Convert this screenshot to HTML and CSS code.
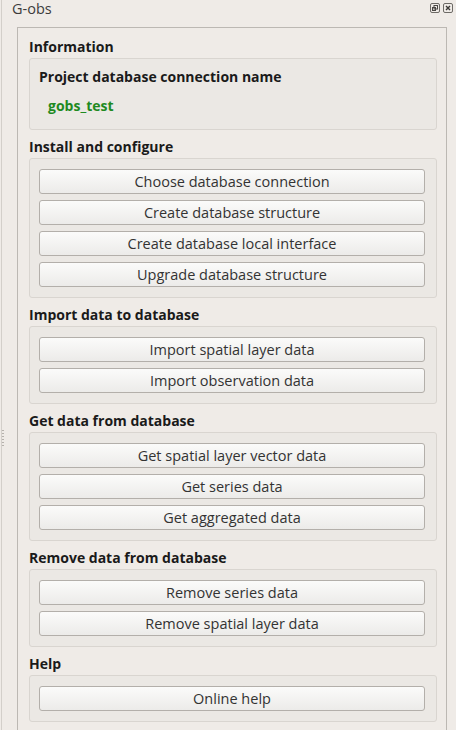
FILE: index.html
```html
<!DOCTYPE html>
<html>
<head>
<meta charset="utf-8">
<link rel="stylesheet" href="styles.css">
</head>
<body>
<div class="dock">
  <div class="edge"><span class="grip"></span></div>
  <div class="main">
    <div class="titlebar">
      <span class="title">G-obs</span>
      <span class="tools">
        <svg class="tool" width="10" height="10" viewBox="0 0 10 10"><rect x="0.5" y="0.5" width="9" height="9" rx="1.5" fill="none" stroke="#6d6a66"/><rect x="4" y="2.5" width="3.5" height="3.5" fill="none" stroke="#4a4744"/><rect x="2.5" y="4.5" width="3" height="3" fill="none" stroke="#4a4744"/></svg>
        <svg class="tool" width="10" height="10" viewBox="0 0 10 10"><rect x="0.5" y="0.5" width="9" height="9" rx="1.5" fill="none" stroke="#6d6a66"/><path d="M3 3 L7 7 M7 3 L3 7" stroke="#3a3836" stroke-width="1.4"/></svg>
      </span>
    </div>
    <div class="frame">
      <div class="section first">Information</div>
      <div class="group info">
        <div class="label">Project database connection name</div>
        <div class="value">gobs_test</div>
      </div>

      <div class="section">Install and configure</div>
      <div class="group">
        <button class="btn">Choose database connection</button>
        <button class="btn">Create database structure</button>
        <button class="btn">Create database local interface</button>
        <button class="btn">Upgrade database structure</button>
      </div>

      <div class="section">Import data to database</div>
      <div class="group">
        <button class="btn">Import spatial layer data</button>
        <button class="btn">Import observation data</button>
      </div>

      <div class="section">Get data from database</div>
      <div class="group">
        <button class="btn">Get spatial layer vector data</button>
        <button class="btn">Get series data</button>
        <button class="btn">Get aggregated data</button>
      </div>

      <div class="section">Remove data from database</div>
      <div class="group">
        <button class="btn">Remove series data</button>
        <button class="btn">Remove spatial layer data</button>
      </div>

      <div class="section">Help</div>
      <div class="group">
        <button class="btn">Online help</button>
      </div>
    </div>
  </div>
</div>
</body>
</html>
```
FILE: styles.css
```css
*, *::before, *::after {
  box-sizing: border-box;
}
html, body {
  margin: 0;
  padding: 0;
}
body {
  width: 456px;
  height: 730px;
  overflow: hidden;
  background: #efebe7;
  font-family: "Open Sans", "DejaVu Sans", sans-serif;
  color: #3c3c3c;
}
.dock {
  display: flex;
  height: 730px;
}
.edge {
  width: 1px;
  margin-left: 1px;
  background: #d3cfca;
  position: relative;
}
.grip {
  position: absolute;
  left: 1px;
  top: 430px;
  width: 2px;
  height: 16px;
  background: repeating-linear-gradient(to bottom, #b5b1ac 0 1px, transparent 1px 3px);
}
.main {
  flex: 1;
  display: flex;
  flex-direction: column;
}
.titlebar {
  height: 27px;
  display: flex;
  align-items: flex-start;
  justify-content: space-between;
}
.title {
  margin-left: 10px;
  font-size: 14.5px;
  line-height: 18px;
  color: #3c3c3c;
}
.tools {
  display: flex;
  gap: 3px;
  margin-top: 3px;
  margin-right: 3px;
}
.tool {
  display: block;
}
.frame {
  margin-left: 15px;
  width: 430px;
  flex: 1;
  border: 1px solid #bcb8b3;
  border-bottom: none;
  padding: 0 9px 0 11px;
  display: flex;
  flex-direction: column;
}
.section {
  margin-top: 6px;
  height: 22px;
  line-height: 22px;
  font-size: 14px;
  font-weight: 700;
  color: #1a1a1a;
}
.section.first {
  margin-top: 8px;
}
.group {
  border: 1px solid #d9d5d0;
  border-radius: 3px;
  background: #ebe8e4;
  padding: 10px 11px 10px 9px;
  display: flex;
  flex-direction: column;
  gap: 6px;
}
.group.info {
  padding: 9px 9px 14px 9px;
  gap: 11px;
}
.label {
  font-size: 14px;
  font-weight: 700;
  line-height: 18px;
  color: #1a1a1a;
}
.value {
  margin-left: 9px;
  font-size: 14px;
  font-weight: 700;
  line-height: 18px;
  color: #1f8a1f;
}
.btn {
  height: 25px;
  margin: 0;
  padding: 0;
  border: 1px solid #b3afaa;
  border-radius: 3px;
  background: linear-gradient(to bottom, #fbfbfa, #ecebe9);
  font-family: "Open Sans", "DejaVu Sans", sans-serif;
  font-size: 14.5px;
  color: #333333;
  text-align: center;
  line-height: 23px;
}
```
